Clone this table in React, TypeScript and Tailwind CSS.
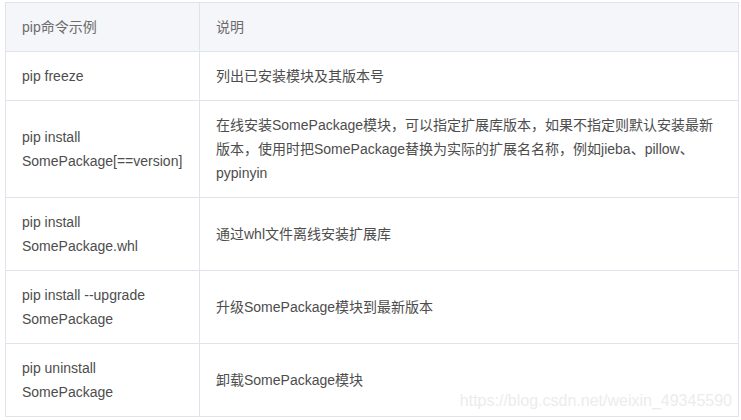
import React from "react";

const rows: [string, string][] = [
  ["pip freeze", "列出已安装模块及其版本号"],
  [
    "pip install SomePackage[==version]",
    "在线安装SomePackage模块，可以指定扩展库版本，如果不指定则默认安装最新版本，使用时把SomePackage替换为实际的扩展名名称，例如jieba、pillow、pypinyin",
  ],
  ["pip install SomePackage.whl", "通过whl文件离线安装扩展库"],
  ["pip install --upgrade SomePackage", "升级SomePackage模块到最新版本"],
  ["pip uninstall SomePackage", "卸载SomePackage模块"],
];

export default function App() {
  return (
    <div
      className="relative w-[741px] h-[420px] bg-white pl-[5px] pt-[2px]"
      style={{ fontFamily: '"Liberation Sans", "Noto Sans CJK SC", sans-serif' }}
    >
      <table className="table-fixed border-collapse w-[734px] text-[14px] leading-6">
        <colgroup>
          <col className="w-[194px]" />
          <col />
        </colgroup>
        <thead>
          <tr className="bg-[#f5f6fa]">
            <th className="border border-[#e0e3ec] px-4 py-3 text-left font-normal text-[#6b6b6b]">
              pip命令示例
            </th>
            <th className="border border-[#e0e3ec] px-4 py-3 text-left font-normal text-[#6b6b6b]">
              说明
            </th>
          </tr>
        </thead>
        <tbody>
          {rows.map(([cmd, desc], i) => (
            <tr key={i}>
              <td className="border border-[#e0e3ec] px-4 py-3 align-middle text-[#4d4d4d]">
                {cmd}
              </td>
              <td className="border border-[#e0e3ec] px-4 py-3 align-middle text-[#4d4d4d]">
                {desc}
              </td>
            </tr>
          ))}
        </tbody>
      </table>
      {/* csdn watermark */}
      <div className="absolute right-[9px] bottom-[9px] text-[16px] leading-5 text-[#ececec]">
        https://blog.csdn.net/weixin_49345590
      </div>
    </div>
  );
}
